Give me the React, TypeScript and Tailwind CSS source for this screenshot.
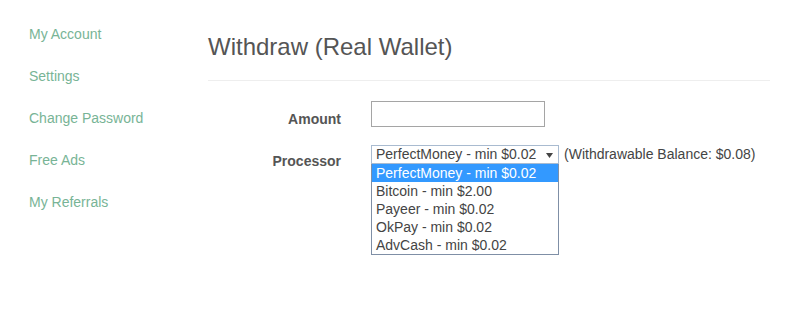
import React from "react";

const links = ["My Account", "Settings", "Change Password", "Free Ads", "My Referrals"];
const options = [
  "PerfectMoney - min $0.02",
  "Bitcoin - min $2.00",
  "Payeer - min $0.02",
  "OkPay - min $0.02",
  "AdvCash - min $0.02",
];

export default function App() {
  return (
    <div
      className="flex w-[785px] h-[321px] bg-white text-[14px] text-[#444]"
      style={{ fontFamily: '"Liberation Sans", Arial, sans-serif' }}
    >
      <nav className="w-[208px] shrink-0 pl-[29px] pt-[24px] flex flex-col gap-[22px]">
        {links.map((l) => (
          <a key={l} className="leading-[20px] text-[#78b496] cursor-pointer">
            {l}
          </a>
        ))}
      </nav>
      <main className="w-[562px] shrink-0 pt-[33px]">
        <h1 className="text-[24px] leading-[28px] text-[#555] font-normal">Withdraw (Real Wallet)</h1>
        <hr className="mt-[19px] border-0 border-t border-[#eee]" />
        <div className="mt-[20px] flex items-start">
          <label className="w-[133px] text-right font-bold leading-[20px] pt-[8px] text-[#555]">Amount</label>
          <input
            className="ml-[30px] w-[174px] h-[26px] border border-[#a5a5a5] bg-white outline-none"
            type="text"
          />
        </div>
        <div className="mt-[16px] flex items-start">
          <label className="w-[133px] text-right font-bold leading-[20px] pt-[6px] text-[#555]">Processor</label>
          <div className="ml-[30px] flex items-start">
            <div className="w-[188px] flex flex-col">
              <div className="h-[19px] border border-[#a9bbd0] flex items-center pl-[4px] pr-[5px] leading-[17px] text-[#444]">
                <span className="flex-1">PerfectMoney - min $0.02</span>
                <svg width="7" height="5" viewBox="0 0 7 5" className="mt-[1px]">
                  <polygon points="0,0 7,0 3.5,5" fill="#444" />
                </svg>
              </div>
              <ul className="border border-[#7f8fa6] border-t-0 bg-white">
                {options.map((o, i) => (
                  <li
                    key={o}
                    className={
                      i === 0
                        ? "h-[18px] leading-[18px] pl-[4px] bg-[#3399ff] text-white"
                        : "h-[18px] leading-[18px] pl-[4px] text-[#444]"
                    }
                  >
                    {o}
                  </li>
                ))}
              </ul>
            </div>
            <span className="ml-[5px] leading-[19px] text-[#444]">(Withdrawable Balance: $0.08)</span>
          </div>
        </div>
      </main>
    </div>
  );
}
